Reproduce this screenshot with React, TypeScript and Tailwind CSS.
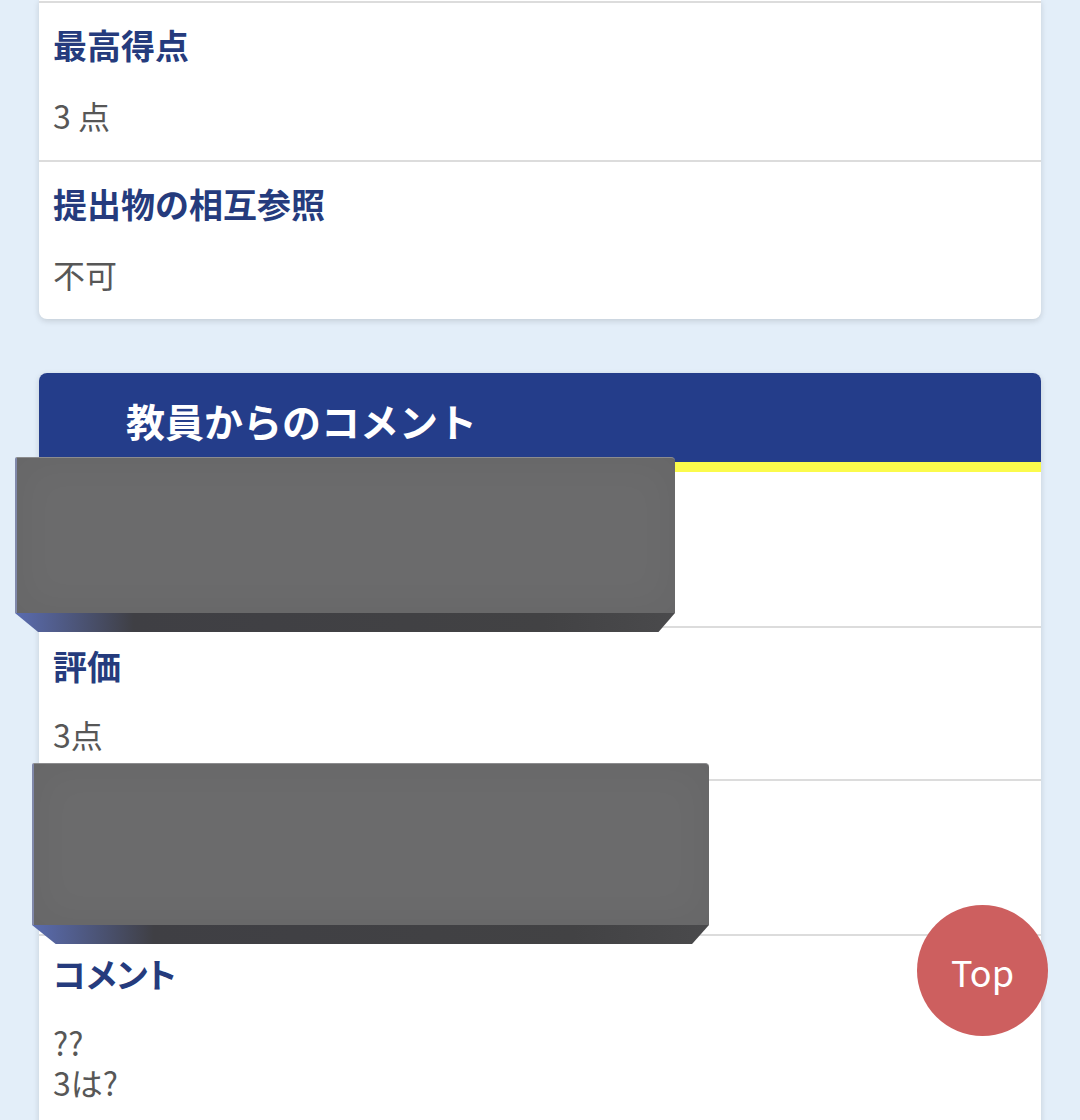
import React from "react";

const font = { fontFamily: '"Noto Sans CJK JP", "Noto Sans", sans-serif' };

function Row({
  label,
  children,
  tight,
}: {
  label: string;
  children: React.ReactNode;
  tight?: boolean;
}) {
  return (
    <div className={tight ? "pt-[18px] pb-[25px] px-[14px]" : "pt-[22px] pb-[25px] px-[14px]"}>
      <div
        className={
          tight
            ? "text-[34px] leading-[40px] font-bold text-[#253b7d] [font-feature-settings:'palt']"
            : "text-[34px] leading-[40px] font-bold text-[#253b7d]"
        }
      >
        {label}
      </div>
      <div
        className={
          (tight ? "mt-[28px]" : "mt-[30px]") +
          " text-[32px] leading-[40px] text-[#575757]"
        }
      >
        {children}
      </div>
    </div>
  );
}

function Divider() {
  return <div className="h-[2px] bg-[#dcdcdc]" />;
}

function Block({ className, faceH }: { className: string; faceH: string }) {
  return (
    <div className={"absolute " + className}>
      <div
        className={
          "w-full rounded-tr-[4px] rounded-tl-[2px] bg-[#6b6b6c] border-t border-t-[#8c8c8e] border-l-2 border-l-[#8088aa] shadow-[inset_0_0_40px_rgba(0,0,0,0.05)] " +
          faceH
        }
      />
      <div className="h-[19px] w-full bg-[linear-gradient(90deg,#5a6cb0_0%,#3f3f44_18%,#424244_80%,#4a4a4c_100%)] [clip-path:polygon(0_0,100%_0,97.5%_100%,3.5%_100%)]" />
    </div>
  );
}

export default function App() {
  return (
    <div
      className="relative w-[1080px] h-[1120px] overflow-hidden bg-[#e3eef9]"
      style={font}
    >
      <div className="px-[39px]">
        {/* Card 1 (continues above viewport) */}
        <div className="bg-white rounded-b-[8px] shadow-[0_2px_6px_rgba(0,0,0,0.14)] pt-[1px]">
          <Divider />
          <Row label="最高得点">3 点</Row>
          <Divider />
          <Row label="提出物の相互参照">不可</Row>
        </div>

        {/* Card 2 */}
        <div className="mt-[54px] bg-white rounded-t-[8px] shadow-[0_2px_6px_rgba(0,0,0,0.14)]">
          <div className="h-[89px] rounded-t-[8px] bg-[#243d8a] flex items-center pl-[87px] pt-[6px]">
            <h2 className="text-[39px] leading-none font-bold text-white">
              教員からのコメント
            </h2>
          </div>
          <div className="h-[10px] bg-[#fbfb4c]" />
          <div className="h-[154px]" />
          <Divider />
          <Row label="評価" tight>
            3点
          </Row>
          <Divider />
          <div className="h-[153px]" />
          <Divider />
          <Row label="コメント" tight>
            <div>??</div>
            <div>3は?</div>
          </Row>
        </div>
      </div>

      {/* Redaction blocks */}
      <Block className="left-[15px] top-[457px] w-[660px]" faceH="h-[156px]" />
      <Block className="left-[32px] top-[763px] w-[677px]" faceH="h-[162px]" />

      {/* Top button */}
      <button className="absolute left-[917px] top-[905px] w-[131px] h-[131px] rounded-full bg-[#cd5f5f] flex items-center justify-center text-white text-[36px] leading-none">
        Top
      </button>
    </div>
  );
}
